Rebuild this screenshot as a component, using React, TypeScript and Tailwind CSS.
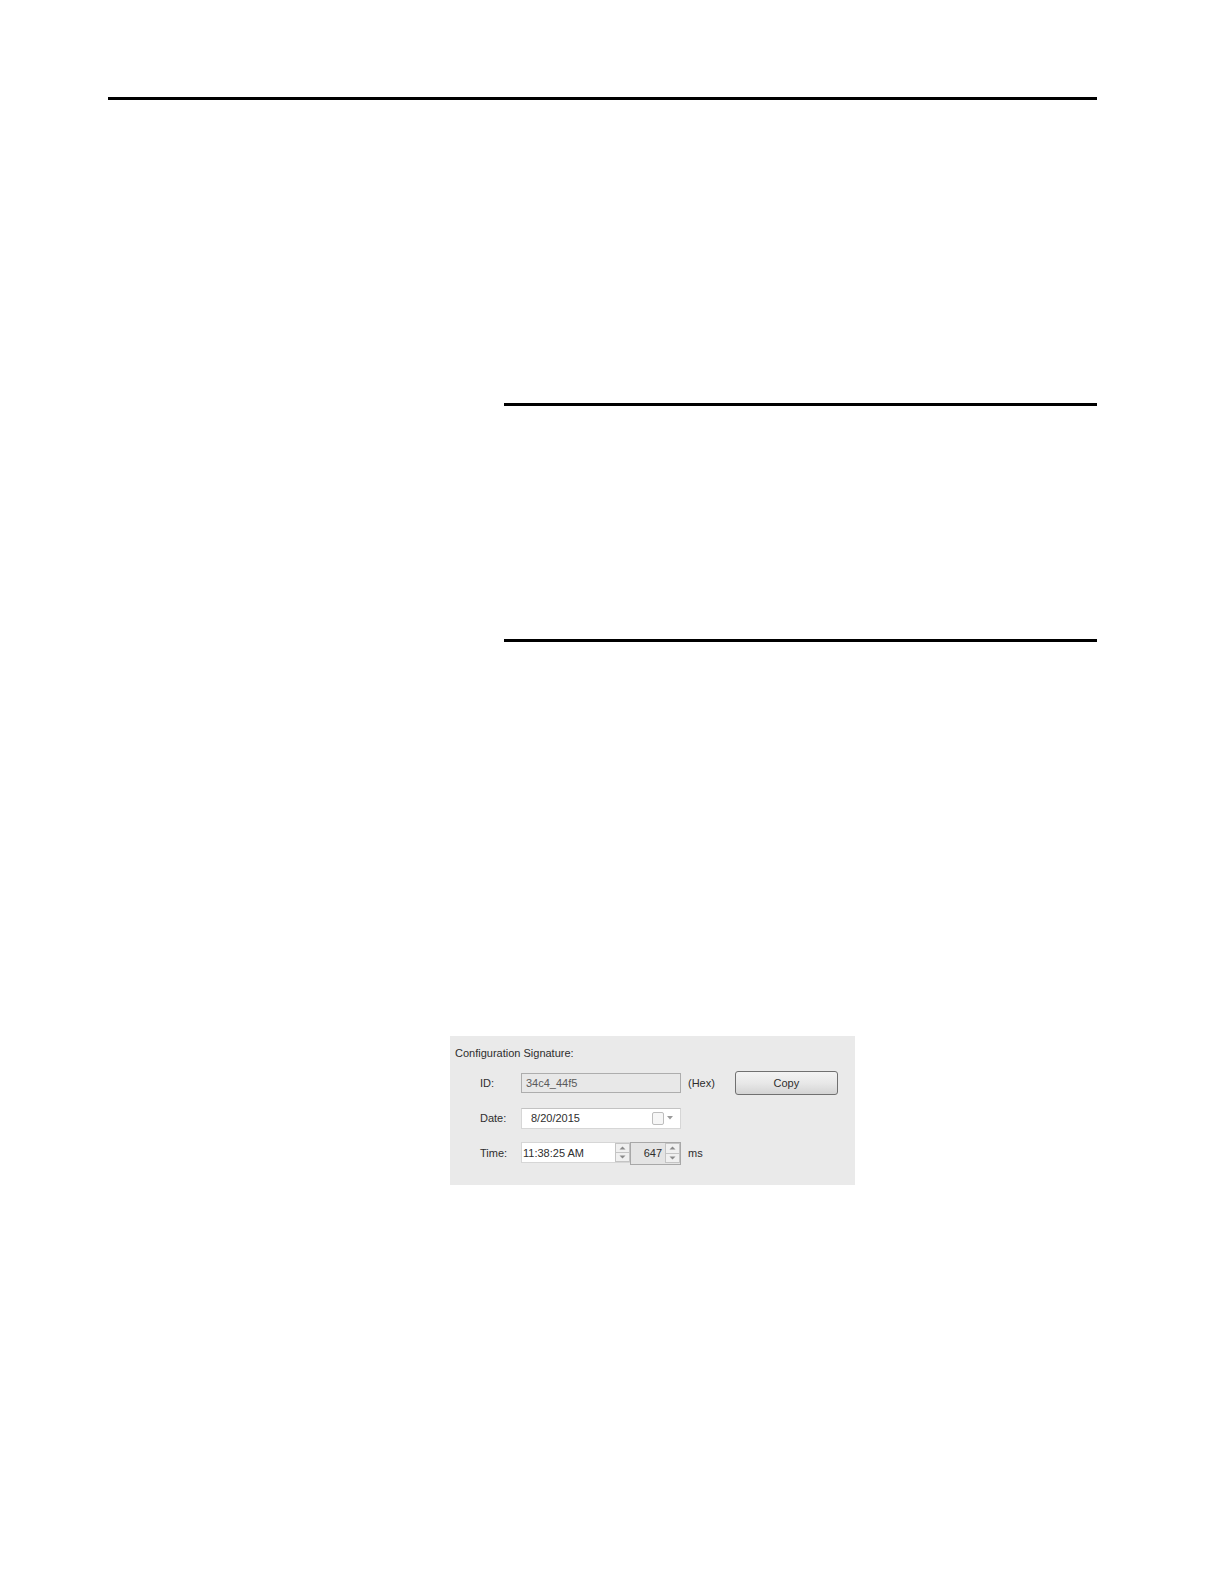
import React from "react";

function Arrow({ up }: { up?: boolean }) {
  return (
    <svg width="7" height="4" viewBox="0 0 7 4" className="block">
      {up ? <path d="M0.5 3.5 L3.5 0.5 L6.5 3.5 Z" fill="#8a8a8a" /> : <path d="M0.5 0.5 L3.5 3.5 L6.5 0.5 Z" fill="#8a8a8a" />}
    </svg>
  );
}

function Spinner() {
  return (
    <div className="flex flex-col w-[15px] h-full">
      <div className="flex-1 flex items-center justify-center border border-[#c4c4c4] bg-[#f0f0f0]">
        <Arrow up />
      </div>
      <div className="flex-1 flex items-center justify-center border border-t-0 border-[#c4c4c4] bg-[#f0f0f0]">
        <Arrow />
      </div>
    </div>
  );
}

function SignaturePanel() {
  return (
    <div className="ml-[450px] mt-[394px] w-[405px] h-[149px] bg-[#eaeaea] pt-[10px] pl-[5px] text-[11px] leading-[14px] text-[#2e2e2e]">
      <div>Configuration Signature:</div>

      <div className="mt-[11px] pl-[25px] flex flex-col gap-[11px]">
        {/* ID row */}
        <div className="flex items-center h-[24px]">
          <div className="w-[41px]">ID:</div>
          <div className="w-[160px] h-[20px] border border-[#adadad] bg-[#e8e8e8] pl-[4px] flex items-center text-[#5a5a5a]">
            34c4_44f5
          </div>
          <div className="ml-[7px]">(Hex)</div>
          <button className="ml-[20px] w-[103px] h-[24px] rounded-[3px] border border-[#707070] bg-linear-to-b from-[#f3f3f3] via-[#e8e8e8] to-[#d4d4d4] text-[#2e2e2e] text-[11px]">
            Copy
          </button>
        </div>

        {/* Date row */}
        <div className="flex items-center h-[24px]">
          <div className="w-[41px]">Date:</div>
          <div className="w-[160px] h-[21px] border border-[#d6d6d6] border-t-[#c2c2c2] bg-white pl-[9px] flex items-center">
            <span className="flex-1">8/20/2015</span>
            <span className="w-[12px] h-[13px] border border-[#bdbdbd] rounded-[2px] bg-[#f6f6f6]" />
            <span className="ml-[3px] mr-[7px]">
              <svg width="6" height="4" viewBox="0 0 6 4" className="block">
                <path d="M0 0 L6 0 L3 3.5 Z" fill="#9a9a9a" />
              </svg>
            </span>
          </div>
        </div>

        {/* Time row */}
        <div className="flex items-start h-[24px]">
          <div className="w-[41px] self-center">Time:</div>
          <div className="mt-[1px] w-[109px] h-[21px] bg-white border border-[#d6d6d6] border-r-0 pl-[1px] flex items-center">
            <span className="flex-1">11:38:25 AM</span>
            <Spinner />
          </div>
          <div className="mt-[1px] w-[51px] h-[23px] border border-[#a8a8a8] bg-[#e4e4e4] flex items-start">
            <div className="h-[20px] flex-1 flex items-center justify-end pr-[3px]">647</div>
            <div className="h-[20px]">
              <Spinner />
            </div>
          </div>
          <div className="ml-[7px] self-center">ms</div>
        </div>
      </div>
    </div>
  );
}

export default function App() {
  return (
    <div className="w-[1224px] h-[1584px] bg-white overflow-hidden font-['Liberation_Sans',Arial,sans-serif]">
      <div className="pt-[97px]">
        <div className="ml-[108px] w-[989px] h-[3px] bg-black" />
        <div className="ml-[504px] mt-[303px] w-[593px] h-[3px] bg-black" />
        <div className="ml-[504px] mt-[233px] w-[593px] h-[3px] bg-black" />
        <SignaturePanel />
      </div>
    </div>
  );
}
